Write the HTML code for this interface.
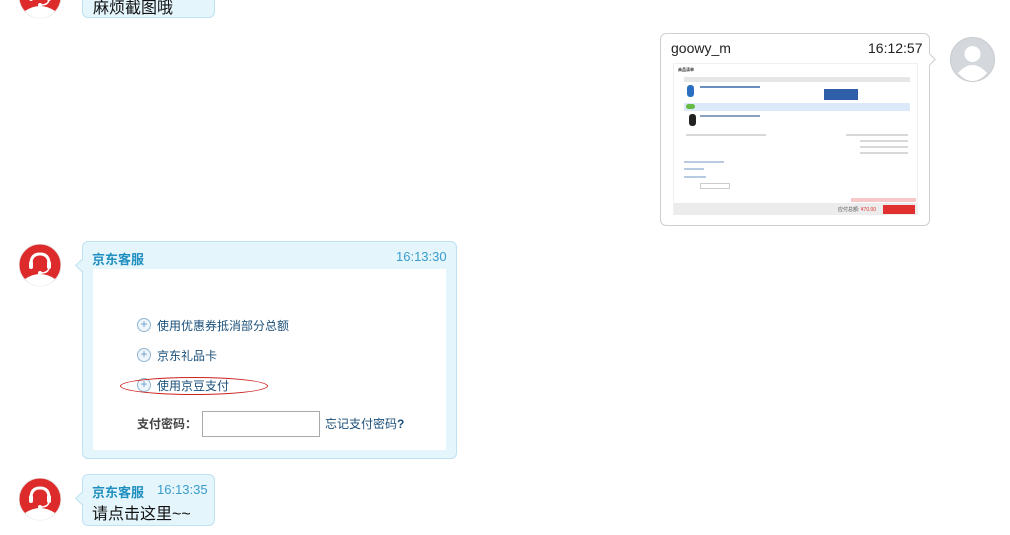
<!DOCTYPE html>
<html><head><meta charset="utf-8"><style>
*{margin:0;padding:0;box-sizing:border-box}
body{width:1010px;height:535px;background:#fff;position:relative;overflow:hidden;font-family:"Liberation Sans","Noto Sans CJK SC",sans-serif}
.a{position:absolute}
.bub{position:absolute;background:#e4f5fc;border:1px solid #bfe3f2;border-radius:6px}
.tail{position:absolute;width:9px;height:9px;background:#e4f5fc;border-left:1px solid #bfe3f2;border-bottom:1px solid #bfe3f2;transform:rotate(45deg)}
.nm{color:#1f8fbf;font-weight:bold;font-size:13px}
.tm{color:#3a9ccc;font-size:13px}
.t{position:absolute;font-size:12px;color:#1a4f7a;white-space:nowrap}
.pl{position:absolute;width:14px;height:14px;border:1px solid #8fb6d3;border-radius:50%;background:#eef5fb;color:#6a9ccc;font-size:12px;line-height:11px;text-align:center}
.g{position:absolute;background:#d8d8d8}
</style></head><body>
<svg width="0" height="0" style="position:absolute"><defs>
<g id="av"><circle cx="21" cy="21" r="21" fill="#dd2a2a" stroke="#e8e8e8"/><path d="M6 35 Q21 25 36 35 Q30 42 21 42 Q12 42 6 35Z" fill="#fff"/><path d="M12 20 Q12 10 21 10 Q30 10 30 20" fill="none" stroke="#fff" stroke-width="3"/><rect x="10" y="17" width="4" height="8" rx="2" fill="#fff"/><rect x="28" y="17" width="4" height="8" rx="2" fill="#fff"/><path d="M30 24 Q29 29 22 29" fill="none" stroke="#fff" stroke-width="1.5"/><circle cx="21" cy="29" r="2" fill="#fff"/></g></defs></svg>

<svg class="a" style="left:19px;top:-24px" width="42" height="44"><use href="#av"/></svg>
<div class="bub" style="left:82px;top:-10px;width:133px;height:28px"></div>
<div class="a" style="left:93px;top:-6px;font-size:16px;color:#111">麻烦截图哦</div>

<div class="a" style="left:660px;top:33px;width:270px;height:193px;border:1px solid #cfcfcf;border-radius:6px;background:#fff"></div>
<div class="a" style="left:925px;top:55px;width:9px;height:9px;background:#fff;border-right:1px solid #cfcfcf;border-top:1px solid #cfcfcf;transform:rotate(45deg)"></div>
<div class="a" style="left:671px;top:40px;font-size:14px;color:#222">goowy_m</div>
<div class="a" style="left:868px;top:40px;font-size:14px;color:#222">16:12:57</div>
<div class="a" style="left:673px;top:63px;width:245px;height:152px;background:#fff;border:1px solid #f0f0f0"></div>
<div class="a" style="left:678px;top:67px;font-size:4px;font-weight:bold;color:#333">商品清单</div>
<div class="g" style="left:684px;top:77px;width:226px;height:5px;background:#e6e6e6"></div>
<div class="a" style="left:687px;top:85px;width:7px;height:12px;background:#2a6fc0;border-radius:3px"></div>
<div class="g" style="left:700px;top:86px;width:60px;height:2px;background:#6a8ec0"></div>
<div class="a" style="left:824px;top:89px;width:34px;height:11px;background:#2f5fa8"></div>
<div class="a" style="left:684px;top:103px;width:226px;height:8px;background:#dbe9f8"></div>
<div class="a" style="left:686px;top:104px;width:9px;height:5px;background:#66bb44;border-radius:3px"></div>
<div class="a" style="left:689px;top:114px;width:7px;height:12px;background:#222;border-radius:3px"></div>
<div class="g" style="left:700px;top:115px;width:60px;height:2px;background:#8aa0c0"></div>
<div class="g" style="left:686px;top:134px;width:80px;height:2px"></div>
<div class="g" style="left:846px;top:134px;width:62px;height:2px"></div>
<div class="g" style="left:860px;top:140px;width:48px;height:2px"></div>
<div class="g" style="left:860px;top:146px;width:48px;height:2px"></div>
<div class="g" style="left:860px;top:152px;width:48px;height:2px"></div>
<div class="g" style="left:684px;top:161px;width:40px;height:2px;background:#b8cbe0"></div>
<div class="g" style="left:684px;top:168px;width:20px;height:2px;background:#b8cbe0"></div>
<div class="g" style="left:684px;top:176px;width:22px;height:2px;background:#b8cbe0"></div>
<div class="a" style="left:700px;top:183px;width:30px;height:6px;border:1px solid #ccc"></div>
<div class="a" style="left:851px;top:198px;width:65px;height:4px;background:#f7c8c8"></div>
<div class="a" style="left:674px;top:203px;width:243px;height:12px;background:#ececec"></div>
<div class="a" style="left:838px;top:206px;font-size:5px;color:#555">应付总额: <span style="color:#d33">¥70.00</span></div>
<div class="a" style="left:883px;top:205px;width:32px;height:9px;background:#e03030"></div>
<svg class="a" style="left:950px;top:37px" width="45" height="45"><circle cx="22.5" cy="22.5" r="22" fill="#d4d8dc" stroke="#c8cccf"/><circle cx="22.5" cy="17" r="8" fill="#fff"/><path d="M8 36 Q22.5 20 37 36 Q30 44 22.5 44 Q15 44 8 36Z" fill="#fff"/></svg>

<svg class="a" style="left:19px;top:244px" width="42" height="44"><use href="#av"/></svg>
<div class="bub" style="left:82px;top:241px;width:375px;height:218px"></div>
<div class="tail" style="left:77px;top:261px"></div>
<div class="a nm" style="left:92px;top:249px">京东客服</div>
<div class="a tm" style="left:396px;top:249px">16:13:30</div>
<div class="a" style="left:93px;top:269px;width:353px;height:181px;background:#fff"></div>
<div class="pl" style="left:137px;top:318px">+</div><div class="t" style="left:157px;top:317px">使用优惠券抵消部分总额</div>
<div class="pl" style="left:137px;top:348px">+</div><div class="t" style="left:157px;top:347px">京东礼品卡</div>
<div class="pl" style="left:137px;top:378px">+</div><div class="t" style="left:157px;top:377px">使用京豆支付</div>
<div class="a" style="left:120px;top:377px;width:148px;height:18px;border:1px solid #c22;border-radius:50%"></div>
<div class="a" style="left:137px;top:415px;font-size:12px;font-weight:bold;color:#444">支付密码：</div>
<div class="a" style="left:202px;top:411px;width:118px;height:26px;border:1px solid #aaa;background:#fff"></div>
<div class="t" style="left:325px;top:415px">忘记支付密码<b>?</b></div>

<svg class="a" style="left:19px;top:478px" width="42" height="44"><use href="#av"/></svg>
<div class="bub" style="left:82px;top:474px;width:133px;height:52px"></div>
<div class="tail" style="left:77px;top:494px"></div>
<div class="a nm" style="left:92px;top:482px">京东客服</div>
<div class="a tm" style="left:157px;top:482px">16:13:35</div>
<div class="a" style="left:92px;top:500px;font-size:16px;color:#111">请点击这里~~</div>
</body></html>
